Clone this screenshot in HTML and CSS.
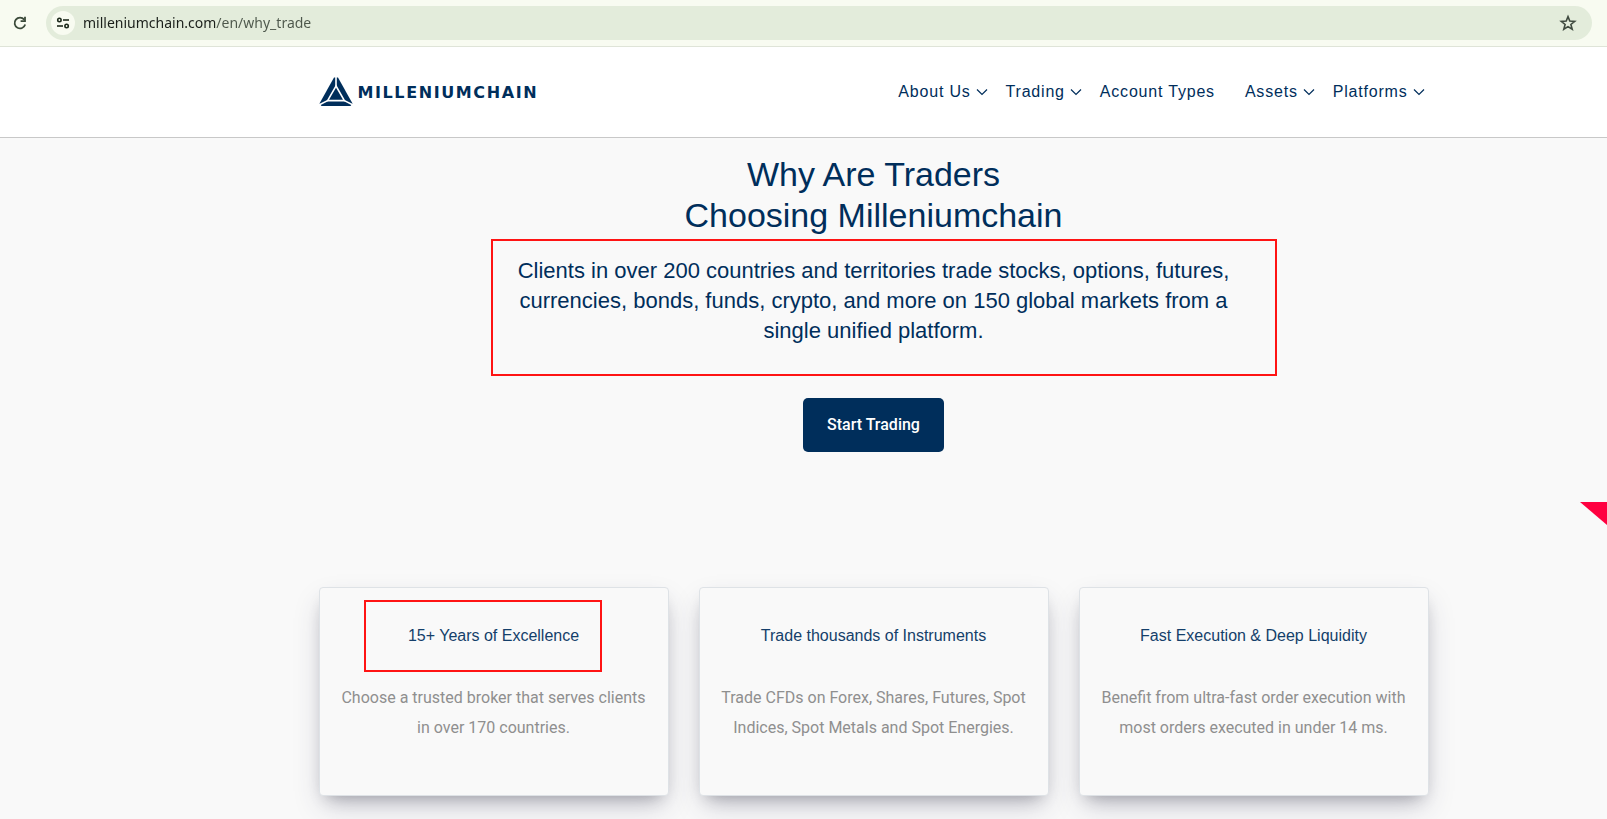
FILE: index.html
```html
<!DOCTYPE html>
<html lang="en">
<head>
    <meta charset="UTF-8">
    <meta name="viewport" content="width=device-width, initial-scale=1.0">
    <title>Why Trade | Milleniumchain</title>
    <link rel="stylesheet" href="styles.css">
</head>
<body>

    <!-- Browser toolbar -->
    <div class="toolbar">
        <button class="icon-btn" type="button" aria-label="Reload">
            <svg width="16" height="16" viewBox="0 0 16 16" fill="none" stroke="#3b4a3a" stroke-width="1.8">
                <path d="M12.2 4.6A5.4 5.4 0 1 0 13.2 9.6"/>
                <path d="M13 1.8V6.2H8.6"/>
            </svg>
        </button>
        <div class="address-bar">
            <button class="site-info" type="button" aria-label="Site information">
                <svg width="14" height="14" viewBox="0 0 14 14" fill="none" stroke="#1d2a1c" stroke-width="1.6">
                    <circle cx="3.4" cy="4" r="1.7"/>
                    <path d="M7 4H13"/>
                    <circle cx="10.6" cy="10" r="1.7"/>
                    <path d="M1 10H7"/>
                </svg>
            </button>
            <input class="address" type="text" aria-label="Address" value="milleniumchain.com/en/why_trade">
            <button class="icon-btn" type="button" aria-label="Bookmark this page">
                <svg width="18" height="18" viewBox="0 0 18 18" fill="none" stroke="#3f4a3f" stroke-width="1.6">
                    <path d="M9 2.6L10.8 7.1L15.7 7.4L11.9 10.5L13.2 15.2L9 12.6L4.8 15.2L6.1 10.5L2.3 7.4L7.2 7.1Z"/>
                </svg>
            </button>
        </div>
    </div>

    <header class="header">
        <div class="container header-inner">
            <a class="logo" href="#">
                <svg width="34" height="30" viewBox="0 0 34 30">
                    <path d="M15 0.5H19L33.5 26.5L31.5 29H2.5L0.5 26.5Z" fill="#002e5b"/>
                    <path d="M17 9L25.4 23.6H8.6Z" fill="none" stroke="#fff" stroke-width="1.6"/>
                    <path d="M17 0V9M25.4 23.6L34 28M8.6 23.6L0 28" fill="none" stroke="#fff" stroke-width="1.6"/>
                </svg>
                <span class="logo-text">MILLENIUMCHAIN</span>
            </a>
            <nav class="nav">
                <a class="has-menu" href="#">About Us<svg class="chevron" viewBox="0 0 12 8"><path d="M1 1.5L6 6.5L11 1.5"/></svg></a>
                <a class="has-menu" href="#">Trading<svg class="chevron" viewBox="0 0 12 8"><path d="M1 1.5L6 6.5L11 1.5"/></svg></a>
                <a class="no-menu" href="#">Account Types</a>
                <a class="has-menu" href="#">Assets<svg class="chevron" viewBox="0 0 12 8"><path d="M1 1.5L6 6.5L11 1.5"/></svg></a>
                <a class="has-menu" href="#">Platforms<svg class="chevron" viewBox="0 0 12 8"><path d="M1 1.5L6 6.5L11 1.5"/></svg></a>
            </nav>
        </div>
    </header>

    <main class="main">
        <section class="hero">
            <h1>Why Are Traders<br>Choosing Milleniumchain</h1>
            <div class="lead">
                <p>Clients in over 200 countries and territories trade stocks, options, futures, currencies, bonds, funds, crypto, and more on 150 global markets from a single unified platform.</p>
                <div class="mark mark-lead"></div>
            </div>
            <button class="start-btn" type="button">Start Trading</button>
            <div class="ribbon"></div>
        </section>

        <!-- Feature cards -->
        <section class="container cards">
            <div class="card">
                <h2>15+ Years of Excellence</h2>
                <p>Choose a trusted broker that serves clients in over 170 countries.</p>
                <div class="mark mark-card"></div>
            </div>
            <div class="card">
                <h2>Trade thousands of Instruments</h2>
                <p>Trade CFDs on Forex, Shares, Futures, Spot Indices, Spot Metals and Spot Energies.</p>
            </div>
            <div class="card">
                <h2>Fast Execution &amp; Deep Liquidity</h2>
                <p>Benefit from ultra-fast order execution with most orders executed in under 14 ms.</p>
            </div>
        </section>
    </main>

</body>
</html>
```
FILE: styles.css
```css
* { box-sizing: border-box; }
body {
    margin: 0;
    font-family: "Liberation Sans", Arial, sans-serif;
    font-size: 16px;
    color: #002e5b;
    background-color: #f9f9f9;
}
h1, h2, p { margin: 0; font-weight: 400; }
a { color: inherit; text-decoration: none; }
button { border: 0; padding: 0; background: none; cursor: pointer; }
svg { display: block; }

/* Browser toolbar */
.toolbar {
    display: flex;
    align-items: center;
    gap: 18px;
    height: 47px;
    padding: 0 15px 0 12px;
    background-color: #f8fbf1;
    border-bottom: 1px solid #dfe4d8;
}
.address-bar {
    flex: 1;
    display: flex;
    align-items: center;
    height: 34px;
    padding: 0 15px 0 5px;
    border-radius: 17px;
    background-color: #e3ecdb;
}
.site-info {
    display: flex;
    align-items: center;
    justify-content: center;
    width: 24px;
    height: 24px;
    border-radius: 50%;
    background-color: #f8fbf1;
}
.address {
    flex: 1;
    min-width: 0;
    margin-left: 8px;
    padding: 0 0 2px;
    border: 0;
    outline: none;
    font-family: "Noto Sans", "Open Sans", sans-serif;
    font-size: 14px;
    /* domain darker than the path */
    background: linear-gradient(to right, #1a1f1a 132px, #4d574b 132px);
    -webkit-background-clip: text;
    background-clip: text;
    color: transparent;
}

/* Header */
.container {
    width: 100%;
    max-width: 1110px;
    margin: 0 auto;
}
.header {
    padding-left: 140px;
    background-color: #fff;
    border-bottom: 1px solid #c8c8c8;
}
.header-inner {
    display: flex;
    align-items: center;
    justify-content: space-between;
    height: 90px;
}
.logo {
    display: flex;
    align-items: center;
    gap: 5px;
}
.logo-text {
    font-family: "DejaVu Sans", sans-serif;
    font-size: 16px;
    font-weight: 700;
    letter-spacing: 0.1em;
}
.nav {
    display: flex;
    gap: 18px;
    padding-right: 4px;
    letter-spacing: 0.05em;
    line-height: 20px;
}
.nav a { white-space: nowrap; }
.has-menu {
    display: flex;
    align-items: center;
    gap: 5px;
}
.no-menu { margin-right: 12px; }
.chevron {
    width: 12px;
    height: 8px;
    fill: none;
    stroke: #002e5b;
    stroke-width: 1.2;
}

/* Hero */
.main { padding: 0 0 40px 140px; }
.hero {
    position: relative;
    display: flex;
    flex-direction: column;
    align-items: center;
    padding: 16px 0 135px;
    text-align: center;
}
h1 {
    font-size: 34px;
    line-height: 41px;
}
.lead {
    position: relative;
    width: 100%;
    max-width: 730px;
    margin-top: 20px;
    font-size: 22px;
    line-height: 30px;
}
.start-btn {
    margin-top: 52px;
    height: 54px;
    padding: 0 24px 2px;
    border-radius: 5px;
    background-color: #002e5b;
    color: #fff;
    font-family: Roboto, sans-serif;
    font-size: 16px;
    font-weight: 500;
}
.ribbon {
    position: absolute;
    top: 364px;
    right: 0;
    width: 27px;
    height: 23px;
    background-color: #ff0040;
    clip-path: polygon(0 0, 100% 0, 100% 100%);
}

/* Red highlight frames */
.mark {
    position: absolute;
    border: 2px solid #ff1414;
    pointer-events: none;
}
.mark-lead {
    top: -17px;
    right: -38px;
    bottom: -30px;
    left: -18px;
}
.mark-card {
    top: 12px;
    left: 44px;
    width: 238px;
    height: 72px;
}

/* Cards */
.cards {
    display: grid;
    grid-template-columns: repeat(3, 1fr);
    gap: 30px;
}
.card {
    position: relative;
    padding: 32px 16px 52px;
    border: 1px solid #dee2e6;
    border-radius: 4px;
    background-color: #f9f9f9;
    text-align: center;
    box-shadow: 0 13px 27px -5px rgba(50, 50, 93, 0.25), 0 8px 16px -8px rgba(0, 0, 0, 0.3);
}
.card h2 {
    font-size: 16px;
    line-height: 32px;
    color: #143f6a;
}
.card p {
    margin-top: 31px;
    font-family: Roboto, sans-serif;
    font-size: 16px;
    line-height: 30px;
    color: #8f8f8f;
}
```
